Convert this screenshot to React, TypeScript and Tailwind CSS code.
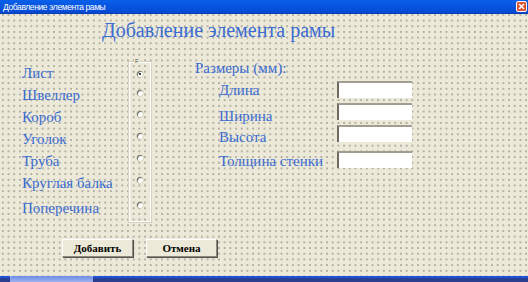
const profiles = ["Лист", "Швеллер", "Короб", "Уголок", "Труба", "Круглая балка", "Поперечина"];

// vertical offsets of the option buttons inside the frame
const radioGaps = ["mt-[8px]", "mt-[13px]", "mt-[15px]", "mt-[16px]", "mt-[16px]", "mt-[16px]", "mt-[19px]"];

const sizes = [
  { label: "Длина", row: "h-[27px] pt-[1px]" },
  { label: "Ширина", row: "h-[21px]" },
  { label: "Высота", row: "h-[24px]" },
  { label: "Толщина стенки", row: "h-[22px]" },
];

const boxGaps = ["mt-[3px]", "mt-[5px]", "mt-[5px]", "mt-[9px]"];

const Radio = ({ checked }: { checked?: boolean }) => (
  <span className="flex items-center justify-center w-[6px] h-[6px] rounded-full bg-white shadow-[inset_1px_1px_0_#6e6c62,0_0_0_0.5px_#c8c4b2]">
    {checked && <span className="w-[2px] h-[2px] rounded-full bg-black" />}
  </span>
);

const FormButton = ({ text }: { text: string }) => (
  <button className="w-[71px] h-[18px] bg-[#ece9d8] border border-t-white border-l-white border-r-[#8c8a80] border-b-[#8c8a80] shadow-[1px_1px_0_#55534c] text-[11px] leading-[14px] font-bold text-black">
    {text}
  </button>
);

export default function App() {
  return (
    <div className="w-[528px] h-[282px] flex flex-col overflow-hidden bg-[#ece9d8]">
      {/* title bar */}
      <div className="h-[14px] flex items-center justify-between bg-gradient-to-b from-[#0a60ea] to-[#0648d2] border-b border-[#0a3cb4]">
        <span className="pl-[3px] text-[8.5px] leading-[12px] text-white font-['Liberation_Sans',sans-serif] tracking-[-0.4px]">
          Добавление элемента рамы
        </span>
        <span className="mr-[1px] w-[11px] h-[11px] flex items-center justify-center rounded-[2px] border border-white bg-[#dc5230] text-white">
          <svg width="7" height="7" viewBox="0 0 7 7">
            <path d="M1 1 L6 6 M6 1 L1 6" stroke="white" strokeWidth="1.6" />
          </svg>
        </span>
      </div>

      {/* form body with design grid */}
      <div className="flex-1 flex flex-col font-['Liberation_Serif',serif] text-[#3b6cd2] bg-[radial-gradient(circle,#333_0.5px,transparent_0.75px)] bg-[length:5.7px_5.7px] bg-[position:0px_-2px]">
        <h1 className="pt-[4px] pl-[102px] text-[20px] leading-[24px] font-normal">
          Добавление элемента рамы
        </h1>

        <div className="mt-[16px] flex">
          <div className="pl-[22px] pt-[4px] w-[129px] flex flex-col text-[15px] leading-[22px]">
            {profiles.map((p, i) => (
              <span key={p} className={i === 6 ? "mt-[3px] whitespace-nowrap" : "whitespace-nowrap"}>
                {p}
              </span>
            ))}
          </div>

          <div className="relative mt-[4px] w-[22px] h-[160px] border border-white shadow-[0_0_0_1px_#d6d2bf] flex flex-col items-center">
            <span className="absolute -top-[5px] left-[4px] text-[6px] leading-[6px] text-[#55534c] bg-[#ece9d8] px-[1px] font-['Liberation_Sans',sans-serif]">
              F
            </span>
            {radioGaps.map((g, i) => (
              <span key={i} className={g}>
                <Radio checked={i === 0} />
              </span>
            ))}
          </div>

          <div className="ml-[44px] flex flex-col">
            <span className="text-[15px] leading-[20px]">Размеры (мм):</span>
            <div className="flex">
              <div className="pl-[24px] w-[142px] flex flex-col text-[15px] leading-[22px]">
                {sizes.map((s) => (
                  <span key={s.label} className={s.row + " whitespace-nowrap"}>
                    {s.label}
                  </span>
                ))}
              </div>
              <div className="flex flex-col">
                {boxGaps.map((g, i) => (
                  <span
                    key={i}
                    className={g + " w-[75px] h-[17px] bg-white border-t-2 border-l-2 border-t-[#a09e92] border-l-[#6e6c62]"}
                  />
                ))}
              </div>
            </div>
          </div>
        </div>

        <div className="mt-[17px] pl-[62px] flex gap-[13px]">
          <FormButton text="Добавить" />
          <FormButton text="Отмена" />
        </div>
      </div>

      {/* window bottom edge */}
      <div className="h-[6px] flex">
        <div className="w-[10px] border-t-2 border-[#2350d8] bg-[#2a3f90]" />
        <div className="w-[83px] bg-gradient-to-b from-[#6d8ce6] to-[#9bb2f0] rounded-t-[2px]" />
        <div className="flex-1 border-t-2 border-[#2350d8] bg-[#2a3f90]" />
      </div>
    </div>
  );
}
